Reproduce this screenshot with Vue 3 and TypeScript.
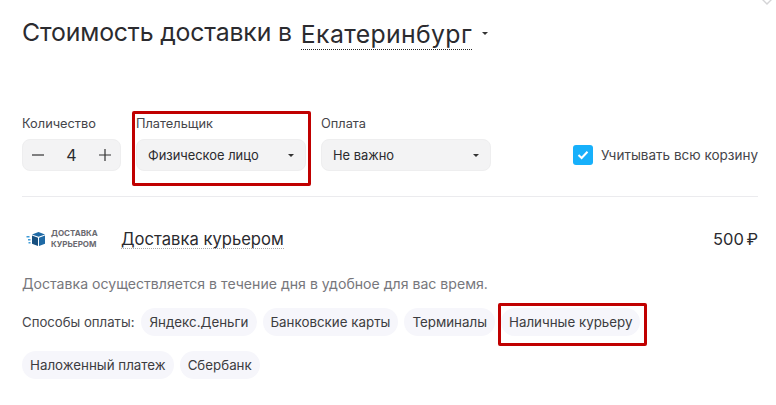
<script setup lang="ts">
const chipsFirst: string[] = ['Яндекс.Деньги', 'Банковские карты', 'Терминалы']
</script>

<template>
  <div class="page">
    <svg class="close" width="18" height="8" viewBox="0 0 18 8"><path d="M2 -3 L9 4 L16 -3" fill="none" stroke="#d4d4d6" stroke-width="1.4" /></svg>
    <h1 class="title">
      <span class="lead">Стоимость доставки в</span>
      <span class="city">Екатеринбург</span>
      <i class="caret title-caret"></i>
    </h1>

    <div class="controls">
      <div class="field">
        <label>Количество</label>
        <div class="box qty">
          <svg width="12" height="12" viewBox="0 0 12 12"><path d="M0 6H12" stroke="#333" stroke-width="1.2" /></svg>
          <span class="num">4</span>
          <svg width="12" height="12" viewBox="0 0 12 12"><path d="M0 6H12M6 0V12" stroke="#333" stroke-width="1.2" /></svg>
        </div>
      </div>
      <div class="field payer">
        <label>Плательщик</label>
        <div class="box select"><span>Физическое лицо</span><i class="caret"></i></div>
        <div class="mark payer-mark"></div>
      </div>
      <div class="field">
        <label>Оплата</label>
        <div class="box select"><span>Не важно</span><i class="caret"></i></div>
      </div>
      <div class="check">
        <span class="tick">
          <svg width="12" height="10" viewBox="0 0 12 10"><path d="M1.5 5L4.6 8L10.5 1.8" fill="none" stroke="#fff" stroke-width="2" /></svg>
        </span>
        <span>Учитывать всю корзину</span>
      </div>
    </div>

    <div class="divider"></div>

    <div class="method">
      <div class="logo">
        <svg width="20" height="16" viewBox="0 0 20 16">
          <path d="M12.5 1L19 3.4L12.5 5.8L6 3.4Z" fill="#1f6aa5" />
          <path d="M6 4.4L12 6.7V15L6 12.7Z" fill="#17507f" />
          <path d="M13 6.7L19 4.4V12.7L13 15Z" fill="#1f6aa5" />
          <path d="M0.5 5H3.5V6.5H0.5ZM2 8H4.5V9.5H2ZM2.5 11H4.5V12.5H2.5Z" fill="#3f9bd8" />
        </svg>
        <div class="logo-text">ДОСТАВКА<br />КУРЬЕРОМ</div>
      </div>
      <span class="method-name">Доставка курьером</span>
      <span class="price">500 ₽</span>
    </div>

    <p class="desc">Доставка осуществляется в течение дня в удобное для вас время.</p>

    <div class="pay">
      <span class="pay-label">Способы оплаты:</span>
      <span v-for="c in chipsFirst" :key="c" class="chip">{{ c }}</span>
      <span class="chip">Наличные курьеру<span class="mark chip-mark"></span></span>
      <span class="chip">Наложенный платеж</span>
      <span class="chip">Сбербанк</span>
    </div>
  </div>
</template>

<style scoped>
.page {
  position: relative;
  width: 776px;
  height: 405px;
  box-sizing: border-box;
  padding: 0 18px 0 22px;
  overflow: hidden;
  background: #fff;
  color: #2b2b2f;
  font-family: Inter, "Noto Sans", sans-serif;
}
.close { position: absolute; top: 0; right: 0; }
.title {
  display: flex;
  align-items: center;
  margin: 0;
  padding-top: 13px;
  height: 38px;
  font-size: 24.8px;
  font-weight: 400;
  line-height: 38px;
  white-space: nowrap;
}
.lead { letter-spacing: -0.15px; }
.city {
  margin-left: 9px;
  height: 34px;
  line-height: 38px;
  letter-spacing: 0.35px;
  border-bottom: 1px dotted #222;
}
.caret {
  display: block;
  width: 0;
  height: 0;
  border-left: 3px solid transparent;
  border-right: 3px solid transparent;
  border-top: 3px solid #333;
}
.title-caret { margin-left: 10px; margin-top: 2px; }
.controls {
  display: flex;
  align-items: flex-end;
  margin-top: 64px;
}
.field { position: relative; display: flex; flex-direction: column; margin-right: 15px; }
.field label { height: 24px; font-size: 12.8px; line-height: 18px; color: #45454a; }
.box {
  display: flex;
  align-items: center;
  box-sizing: border-box;
  height: 32px;
  background: #f3f3f4;
  border: 1px solid #eeeeef;
  border-radius: 8px;
  font-size: 12.9px;
}
.qty { width: 99px; justify-content: space-between; padding: 0 9px; }
.num { font-size: 16px; }
.select { width: 170px; justify-content: space-between; padding: 0 11px; }
.check {
  display: flex;
  align-items: center;
  gap: 8px;
  margin-left: auto;
  height: 32px;
  font-size: 13.5px;
  color: #45454a;
  white-space: nowrap;
}
.tick {
  display: flex;
  align-items: center;
  justify-content: center;
  width: 20px;
  height: 20px;
  border-radius: 3px;
  background: #17b0fb;
}
.mark {
  position: absolute;
  box-sizing: border-box;
  border: 3px solid #c00000;
  border-radius: 2px;
  pointer-events: none;
}
.payer-mark { left: -4px; top: -4px; width: 179px; height: 75px; }
.divider { height: 1px; margin-top: 25px; background: #ebebee; }
.method {
  display: flex;
  align-items: center;
  height: 30px;
  margin-top: 27px;
}
.logo { display: flex; align-items: center; gap: 5px; width: 99px; margin-left: 4px; margin-right: -4px; }
.logo-text { font-size: 8px; line-height: 11px; font-weight: 700; color: #6a6a70; }
.method-name { font-size: 16.6px; border-bottom: 1px dotted #aaa; line-height: 18px; }
.price { margin-left: auto; font-size: 16.5px; word-spacing: -2px; }
.desc { margin: 21px 0 0; font-size: 14.1px; line-height: 18px; color: #77777c; }
.pay {
  display: flex;
  flex-wrap: wrap;
  align-items: center;
  gap: 15px 6px;
  width: 660px;
  margin-top: 15px;
  font-size: 13.35px;
}
.pay-label { color: #45454a; font-size: 13.2px; margin-right: 1px; }
.chip {
  position: relative;
  display: block;
  height: 28px;
  padding: 0 8px;
  line-height: 28px;
  border-radius: 14px;
  background: #f6f6fb;
  color: #3c3c40;
  white-space: nowrap;
}
.chip-mark { left: -3px; top: -5px; right: -7px; bottom: -10px; }
</style>
